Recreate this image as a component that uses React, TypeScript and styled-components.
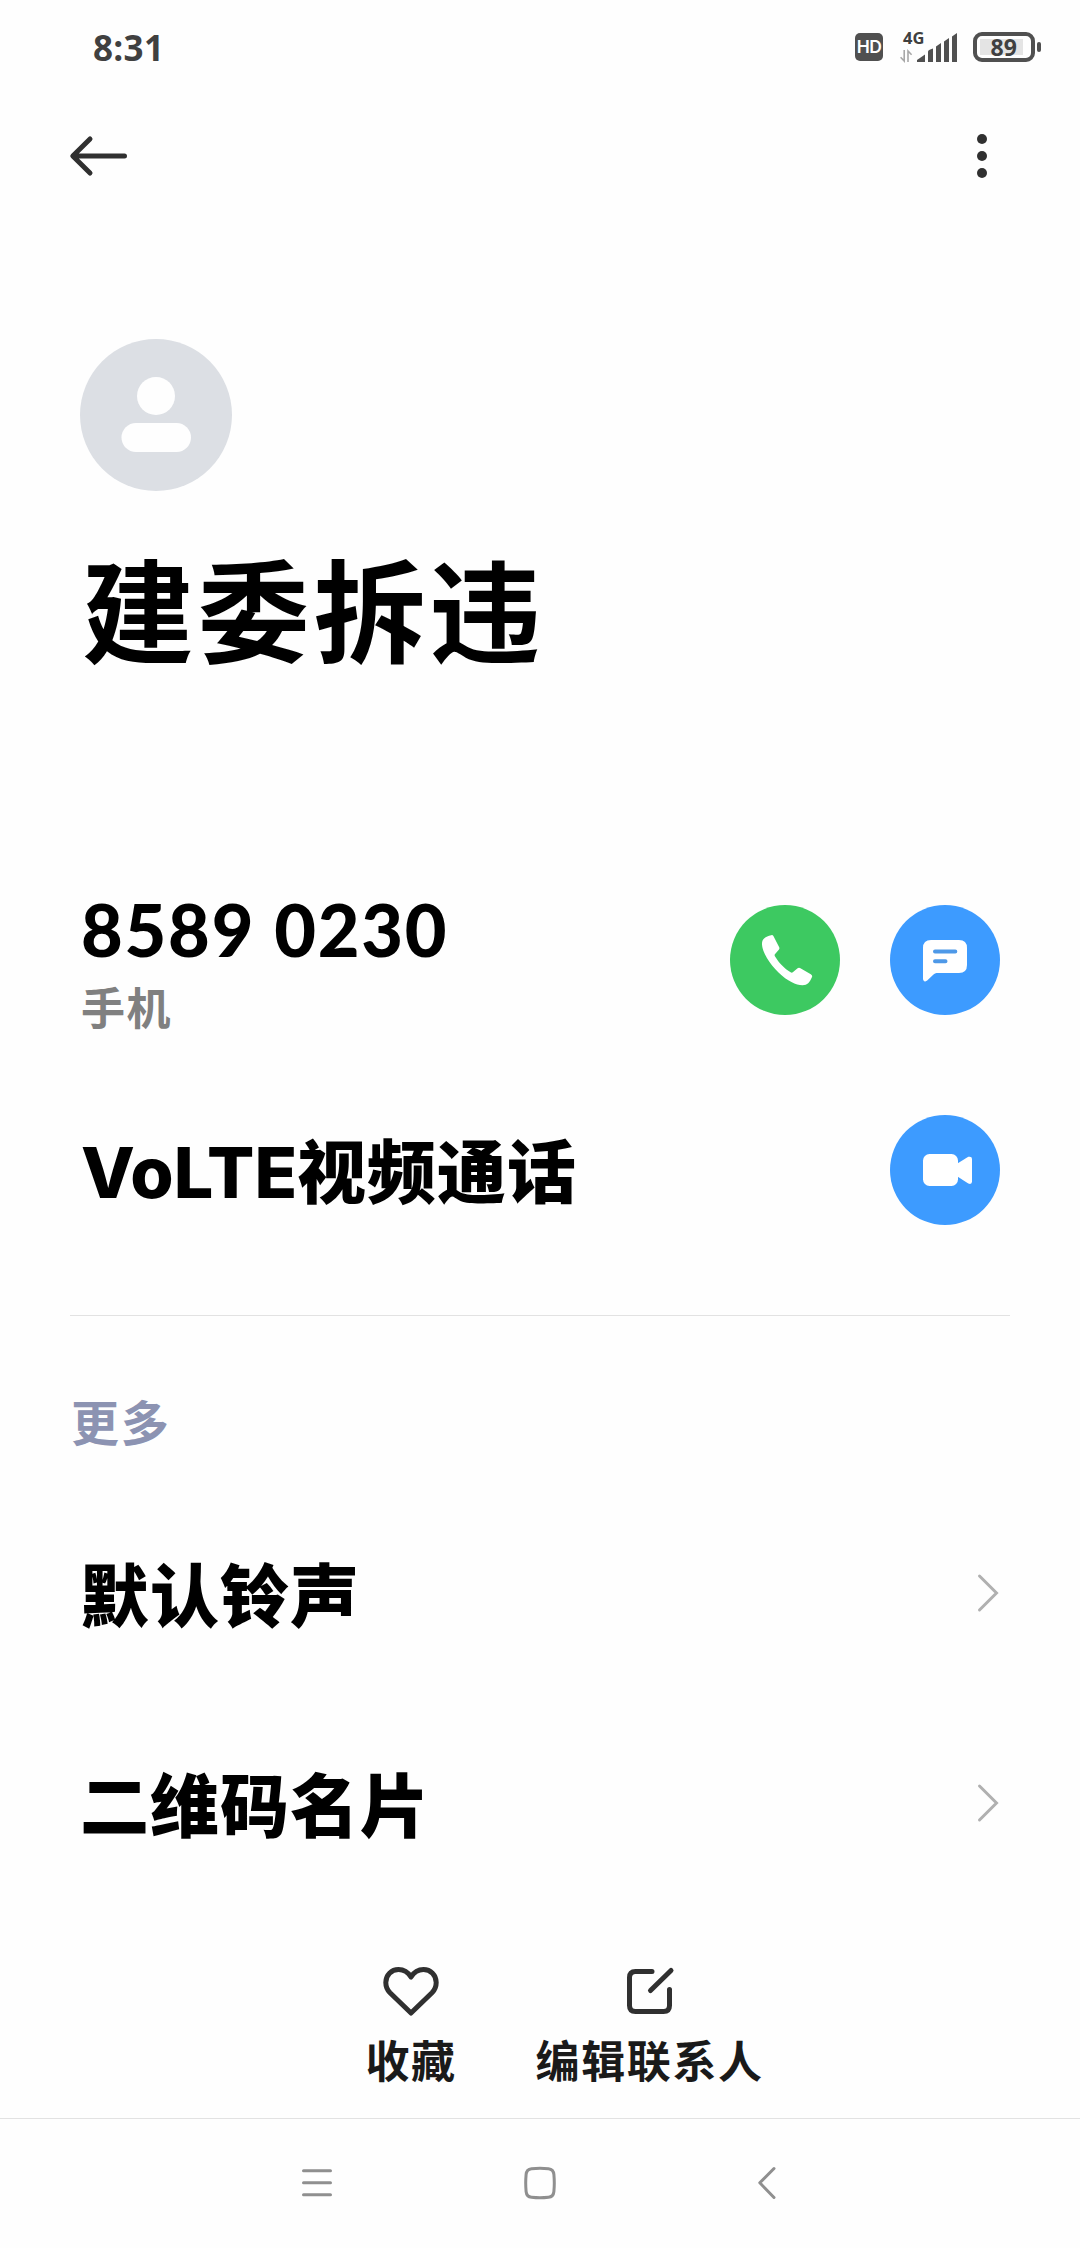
import React from "react";
import styled, { createGlobalStyle } from "styled-components";

const CJK = '"Noto Sans CJK SC", sans-serif';

const GlobalStyle = createGlobalStyle`
  *, *::before, *::after { box-sizing: border-box; }
  body { margin: 0; background: #fefefe; font-family: ${CJK}; }
  svg { display: block; flex: none; }
  button { border: 0; padding: 0; background: none; font: inherit; color: inherit; }
`;

const Screen = styled.div`
  width: 1080px;
  height: 2248px;
  display: flex;
  flex-direction: column;
  background: #fefefe;
  color: #000;
  overflow: hidden;
`;

const StatusBar = styled.header`
  height: 94px;
  flex: none;
  display: flex;
  justify-content: space-between;
  align-items: center;
  padding: 0 39px 0 93px;
`;

const Clock = styled.time`
  font: 700 35px/40px "Open Sans", sans-serif;
  letter-spacing: 0.3px;
  padding-top: 2px;
  color: #404040;
`;

const StatusIcons = styled.div`
  display: flex;
  align-items: center;
`;

const HdBadge = styled.span`
  width: 28px;
  height: 28px;
  margin-right: 17px;
  border-radius: 5px;
  background: #505050;
  color: #fff;
  font: 600 17.5px/28px Inter, sans-serif;
  letter-spacing: -0.6px;
  text-align: center;
`;

const Signal = styled.div`
  width: 57px;
  height: 32px;
  margin-right: 16px;
  display: grid;
`;

const SignalLayer = styled.div`
  grid-area: 1 / 1;
`;

const NetworkType = styled.span`
  grid-area: 1 / 1;
  padding-left: 3px;
  font: 700 16.5px/14px "Open Sans", sans-serif;
  color: #404040;
`;

const Battery = styled.div`
  display: flex;
  align-items: center;
  gap: 2px;
`;

const BatteryShell = styled.div`
  width: 62px;
  height: 30px;
  padding: 3px;
  border: 4px solid #505050;
  border-radius: 9px;
`;

const BatteryFill = styled.div`
  width: 43px;
  height: 16px;
  background: #e4e4e4;
  color: #404040;
  font: 700 23px/16px "Open Sans", sans-serif;
  padding-left: 10.5px;
`;

const BatteryTip = styled.div`
  width: 4px;
  height: 10px;
  border-radius: 2px;
  background: #505050;
`;

const AppBar = styled.nav`
  height: 123px;
  flex: none;
  display: flex;
  justify-content: space-between;
  align-items: center;
  padding: 0 88px 0 65px;
`;

const Profile = styled.section`
  height: 653px;
  flex: none;
  padding: 122px 80px 0;
`;

const Name = styled.h1`
  margin: 35px 0 0 2px;
  font: 700 112px/160px ${CJK};
  letter-spacing: 3.7px;
`;

const ContactRow = styled.div`
  height: 210px;
  flex: none;
  display: flex;
  justify-content: space-between;
  align-items: flex-start;
  padding: 35px 80px 0 81px;
`;

const ContactText = styled.div`
  display: flex;
  flex-direction: column;
`;

const Phone = styled.span`
  font: 900 72px/80px Lato, sans-serif;
  letter-spacing: 1.8px;
  margin-top: -16px;
`;

const PhoneType = styled.span`
  font: 700 44px/60px ${CJK};
  letter-spacing: 1.4px;
  color: #808080;
  margin-top: 7px;
`;

const VideoLabel = styled.span`
  display: flex;
  align-items: baseline;
  margin-top: 3px;
`;

const Latin = styled.span`
  font: 800 70px/100px Inter, sans-serif;
`;

const RowTitle = styled.span`
  font: 900 69px/100px ${CJK};
  letter-spacing: 1px;
`;

const Actions = styled.div`
  display: flex;
  gap: 50px;
`;

const RoundButton = styled.button<{ $color: string }>`
  width: 110px;
  height: 110px;
  border-radius: 50%;
  background: ${(p) => p.$color};
`;

const MoreSection = styled.section`
  height: 173px;
  flex: none;
  margin: 25px 70px 0;
  border-top: 1px solid #e2e2e2;
`;

const SectionTitle = styled.h2`
  margin: 69px 0 0 1px;
  font: 700 48px/70px ${CJK};
  letter-spacing: 1.8px;
  color: #8c93b2;
`;

const ListRow = styled.div`
  height: 210px;
  flex: none;
  display: flex;
  justify-content: space-between;
  align-items: center;
  padding: 0 78px 0 80px;

  ${RowTitle} {
    padding-bottom: 3px;
  }
`;

const Toolbar = styled.footer`
  flex: 1;
  display: flex;
  justify-content: center;
  align-items: flex-start;
  gap: 79px;
  padding: 49px 0 0 49px;
`;

const ToolButton = styled.button`
  display: flex;
  flex-direction: column;
  align-items: center;
  gap: 12px;
  font: 700 44px/60px ${CJK};
  letter-spacing: 1.6px;
  color: #1a1a1a;
`;

const NavBar = styled.nav`
  height: 130px;
  flex: none;
  display: flex;
  justify-content: space-between;
  padding: 41px 290px 0 292px;
  border-top: 1px solid #e2e2e2;
`;

const BackArrow = () => (
  <svg width="66" height="50" viewBox="0 0 66 50" fill="none" stroke="#303030" strokeWidth="5" strokeLinecap="round" strokeLinejoin="round">
    <path d="M59.5 25H9M25 8L7.8 25L25 42" />
  </svg>
);

const MoreDots = () => (
  <svg width="20" height="50" viewBox="0 0 20 50" fill="#303030">
    <circle cx="10" cy="8" r="5" />
    <circle cx="10" cy="25" r="5" />
    <circle cx="10" cy="42" r="5" />
  </svg>
);

const SignalBars = () => (
  <svg width="57" height="32" viewBox="0 0 57 32" fill="#505050">
    <path d="M17 31V29L25 23.5V31Z" />
    <path d="M28 31V20.5Q28 18.8 33 17.5V31Z" />
    <path d="M36 31V15.5L41 12V31Z" />
    <path d="M44 31V10.5L49 7V31Z" />
    <path d="M52 31V5.5L57 2V31Z" />
    <path d="M4.2 19V30L.6 26.2M8 31V20L11.6 23.8" fill="none" stroke="#a8a8a8" strokeWidth="1.6" />
  </svg>
);

const Avatar = () => (
  <svg width="152" height="152" viewBox="0 0 152 152">
    <circle cx="76" cy="76" r="76" fill="#dcdfe4" />
    <circle cx="76" cy="57" r="19" fill="#fefefe" />
    <rect x="41.5" y="84" width="69.5" height="29" rx="14.5" fill="#fefefe" />
  </svg>
);

const CallIcon = () => (
  <svg width="110" height="110" viewBox="0 0 110 110" fill="#fff">
    <path d="M41.2 30.2Q42.6 29.7 43.4 31.1L49.2 42.3Q49.8 43.6 48.8 44.7L44.9 49.2C44.4 49.8 44.5 50.5 44.9 51.2C48.7 57.5 54.5 63.6 60.6 67.3C61.4 67.8 62.2 67.8 62.8 67.2L67.6 63.3Q68.7 62.5 70 63.1L80.8 69.2Q82.8 70.4 81.9 72.2C79.6 77.3 77.5 80.2 72.5 80.2C66 80.2 57.5 76.2 48.5 67.5C39.5 58.7 32.2 47 32 39.3C31.9 34 35 31.8 41.2 30.2Z" />
  </svg>
);

const MessageIcon = () => (
  <svg width="110" height="110" viewBox="0 0 110 110">
    <path d="M41 35H69Q77 35 77 43V60Q77 68 69 68H46.5Q45 68.2 43.5 69.6L37.2 75.6Q35.8 76.8 34.3 76.2Q33 75.6 33 74V43Q33 35 41 35Z" fill="#fff" />
    <path d="M45 46.5H65.3M45 56.3H55.5" stroke="#4e99e8" strokeWidth="4" strokeLinecap="round" />
  </svg>
);

const VideoIcon = () => (
  <svg width="110" height="110" viewBox="0 0 110 110" fill="#fff">
    <rect x="33" y="39" width="35" height="32" rx="6.5" />
    <path d="M67 48.8L78.3 41.8Q82 41 82 44V66.5Q82 69.8 78.3 68.6L67 61.2Z" />
  </svg>
);

const Chevron = () => (
  <svg width="26" height="44" viewBox="0 0 26 44" fill="none" stroke="#b0b0b0" strokeWidth="3" strokeLinecap="round">
    <path d="M3.5 5L20.5 22L3.5 39" />
  </svg>
);

const HeartIcon = () => (
  <svg width="60" height="60" viewBox="0 0 60 60" fill="none" stroke="#303030" strokeWidth="5" strokeLinejoin="round">
    <path d="M30 20C26.8 14.8 22.6 12.5 17.5 12.5C10.4 12.5 4.8 18 4.8 25.4C4.8 29.5 6.4 33 9 35.7L30 56L51 35.7C53.6 33 55.2 29.5 55.2 25.4C55.2 18 49.6 12.5 42.5 12.5C37.4 12.5 33.2 14.8 30 20Z" />
  </svg>
);

const EditIcon = () => (
  <svg width="60" height="60" viewBox="0 0 60 60" fill="none" stroke="#303030" strokeWidth="5" strokeLinecap="round">
    <path d="M32 14.5H15.5Q9.5 14.5 9.5 20.5V48.5Q9.5 54.5 15.5 54.5H43.5Q49.5 54.5 49.5 48.5V32.5M30.5 33.5L51 13.5" />
  </svg>
);

const MenuIcon = () => (
  <svg width="50" height="46" viewBox="0 0 50 46" stroke="#8f8f8f" strokeWidth="3" strokeLinecap="round">
    <path d="M11.5 10.8H38.5M11.5 22.8H38.5M11.5 34.8H38.5" />
  </svg>
);

const HomeIcon = () => (
  <svg width="50" height="46" viewBox="0 0 50 46" fill="none" stroke="#8f8f8f" strokeWidth="3">
    <path d="M24 8.2Q28 8.2 32.5 8.7Q37.4 9.2 37.9 14.5Q38.3 19 38.3 23Q38.3 27 37.9 31.5Q37.4 36.8 32.5 37.3Q28 37.8 24 37.8Q20 37.8 15.5 37.3Q10.6 36.8 10.1 31.5Q9.7 27 9.7 23Q9.7 19 10.1 14.5Q10.6 9.2 15.5 8.7Q20 8.2 24 8.2Z" />
  </svg>
);

const NavBackIcon = () => (
  <svg width="50" height="46" viewBox="0 0 50 46" fill="none" stroke="#8f8f8f" strokeWidth="3" strokeLinecap="round" strokeLinejoin="round">
    <path d="M34 8.5L19.8 22.8L34 37.5" />
  </svg>
);

const moreItems = ["默认铃声", "二维码名片"];

export default function App() {
  return (
    <Screen lang="zh-CN">
      <GlobalStyle />
      <StatusBar>
        <Clock>8:31</Clock>
        <StatusIcons>
          <HdBadge>HD</HdBadge>
          <Signal>
            <SignalLayer><SignalBars /></SignalLayer>
            <NetworkType>4G</NetworkType>
          </Signal>
          <Battery>
            <BatteryShell><BatteryFill>89</BatteryFill></BatteryShell>
            <BatteryTip />
          </Battery>
        </StatusIcons>
      </StatusBar>
      <AppBar>
        <button aria-label="返回"><BackArrow /></button>
        <button aria-label="更多选项"><MoreDots /></button>
      </AppBar>
      <Profile>
        <Avatar />
        <Name>建委拆违</Name>
      </Profile>
      <ContactRow>
        <ContactText>
          <Phone>8589 0230</Phone>
          <PhoneType>手机</PhoneType>
        </ContactText>
        <Actions>
          <RoundButton $color="#3dc961" aria-label="拨打"><CallIcon /></RoundButton>
          <RoundButton $color="#3d9bff" aria-label="短信"><MessageIcon /></RoundButton>
        </Actions>
      </ContactRow>
      <ContactRow>
        <VideoLabel>
          <Latin>VoLTE</Latin>
          <RowTitle>视频通话</RowTitle>
        </VideoLabel>
        <Actions>
          <RoundButton $color="#3d9bff" aria-label="视频通话"><VideoIcon /></RoundButton>
        </Actions>
      </ContactRow>
      <MoreSection>
        <SectionTitle>更多</SectionTitle>
      </MoreSection>
      {moreItems.map((item) => (
        <ListRow key={item}>
          <RowTitle>{item}</RowTitle>
          <Chevron />
        </ListRow>
      ))}
      <Toolbar>
        <ToolButton><HeartIcon />收藏</ToolButton>
        <ToolButton><EditIcon />编辑联系人</ToolButton>
      </Toolbar>
      <NavBar>
        <MenuIcon />
        <HomeIcon />
        <NavBackIcon />
      </NavBar>
    </Screen>
  );
}
